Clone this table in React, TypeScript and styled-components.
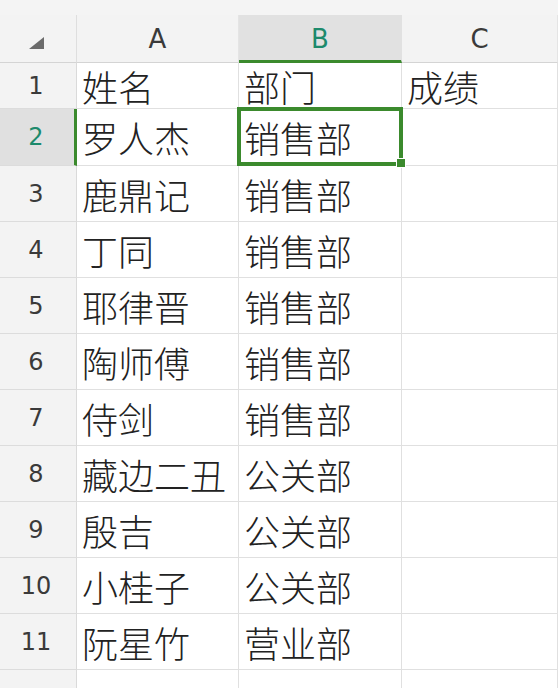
import React from "react";
import styled, { createGlobalStyle } from "styled-components";

const GlobalStyle = createGlobalStyle`
  html, body { margin: 0; padding: 0; background: #ffffff; }
  * { box-sizing: border-box; }
`;

const GREEN = "#3b8a2d";
const TEAL = "#1d8a6c";

const Page = styled.div`
  width: 558px;
  height: 688px;
  overflow: hidden;
  background: #ffffff;
  display: flex;
  flex-direction: column;
`;

const TopStrip = styled.div`
  height: 15px;
  flex: none;
  background: #f4f4f4;
`;

const Grid = styled.div`
  display: grid;
  grid-template-columns: 77px 162px 163px 156px;
  grid-template-rows: 48px 46px 57px repeat(9, 56px) 56px;
`;

const Corner = styled.div`
  background: #f3f3f3;
  border-right: 1px solid #dedede;
  border-bottom: 1px solid #d4d4d4;
  padding: 20px 0 0 29px;
`;

const ColHeader = styled.div<{ $active?: boolean }>`
  display: flex;
  align-items: center;
  justify-content: center;
  background: ${(p) => (p.$active ? "#e1e1e1" : "#f3f3f3")};
  border-right: 1px solid ${(p) => (p.$active ? "#e1e1e1" : "#e4e4e4")};
  border-bottom: ${(p) => (p.$active ? `3px solid ${GREEN}` : "1px solid #d4d4d4")};
  padding-top: ${(p) => (p.$active ? "2px" : "0")};
  font-family: "DejaVu Sans", "Noto Sans", sans-serif;
  font-size: 26px;
  color: ${(p) => (p.$active ? TEAL : "#3a3a3a")};
`;

const RowHeader = styled.div<{ $active?: boolean }>`
  display: flex;
  align-items: center;
  justify-content: center;
  padding-right: ${(p) => (p.$active ? "2px" : "4px")};
  background: ${(p) => (p.$active ? "#e0e0e0" : "#f3f3f3")};
  border-right: ${(p) => (p.$active ? `3px solid ${GREEN}` : "1px solid #dadada")};
  border-bottom: 1px solid #dcdcdc;
  font-family: "DejaVu Sans", "Noto Sans", sans-serif;
  font-size: 24px;
  color: ${(p) => (p.$active ? TEAL : "#3a3a3a")};
`;

const Cell = styled.div`
  position: relative;
  display: flex;
  align-items: center;
  padding-left: 5px;
  white-space: nowrap;
  background: #ffffff;
  border-right: 1px solid #e0e0e0;
  border-bottom: 1px solid #e0e0e0;
  font-family: "Noto Sans CJK SC", "Noto Sans", sans-serif;
  font-weight: 300;
  font-size: 36px;
  color: #222222;
`;

const SelectionBox = styled.div`
  position: absolute;
  z-index: 2;
  top: -2px;
  left: -2px;
  right: -2px;
  bottom: -1px;
  border: 4px solid ${GREEN};
  pointer-events: none;
`;

const FillHandle = styled.div`
  position: absolute;
  right: -7px;
  bottom: -6px;
  width: 10px;
  height: 10px;
  background: ${GREEN};
  border: 1px solid #ffffff;
`;

const rows: [string, string, string][] = [
  ["姓名", "部门", "成绩"],
  ["罗人杰", "销售部", ""],
  ["鹿鼎记", "销售部", ""],
  ["丁同", "销售部", ""],
  ["耶律晋", "销售部", ""],
  ["陶师傅", "销售部", ""],
  ["侍剑", "销售部", ""],
  ["藏边二丑", "公关部", ""],
  ["殷吉", "公关部", ""],
  ["小桂子", "公关部", ""],
  ["阮星竹", "营业部", ""],
  ["", "", ""],
];

export default function App() {
  return (
    <>
      <GlobalStyle />
      <Page>
        <TopStrip />
        <Grid>
          <Corner>
            <svg width="15" height="12" viewBox="0 0 15 12">
              <polygon points="15,0 15,12 0,12" fill="#6b6b6b" />
            </svg>
          </Corner>
          <ColHeader>A</ColHeader>
          <ColHeader $active>B</ColHeader>
          <ColHeader>C</ColHeader>
          {rows.map((r, i) => {
            const n = i + 1;
            const active = n === 2;
            return (
              <React.Fragment key={n}>
                <RowHeader $active={active}>{n <= 11 ? n : ""}</RowHeader>
                <Cell>{r[0]}</Cell>
                <Cell>
                  {r[1]}
                  {active && (
                    <SelectionBox>
                      <FillHandle />
                    </SelectionBox>
                  )}
                </Cell>
                <Cell>{r[2]}</Cell>
              </React.Fragment>
            );
          })}
        </Grid>
      </Page>
    </>
  );
}
